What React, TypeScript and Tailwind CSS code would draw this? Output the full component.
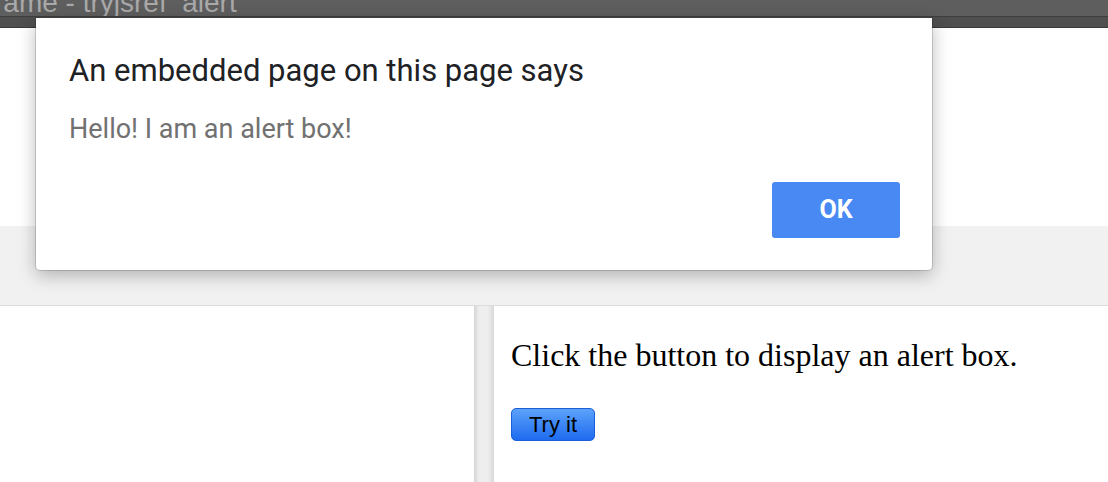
export default function App() {
  return (
    <div className="relative w-[1108px] h-[482px] overflow-hidden bg-white flex flex-col">
      {/* window title bar */}
      <div className="h-[16px] shrink-0 bg-[#5e5e5e] overflow-hidden flex items-end">
        <div className="-ml-[6px] mb-[2px] text-[#a9a9a9] text-[28px] leading-[22px] whitespace-nowrap" style={{ fontFamily: "'Liberation Sans', sans-serif" }}>
          rame - tryjsref_alert
        </div>
      </div>
      <div className="h-px shrink-0 bg-[#3e3e3e]" />
      <div className="h-[10px] shrink-0 bg-[#4f4f4f]" />
      <div className="h-px shrink-0 bg-[#3a3a3a]" />
      {/* page header area */}
      <div className="h-[198px] shrink-0 bg-white" />
      <div className="h-[80px] shrink-0 bg-[#f1f1f1] border-b border-[#dcdcdc]" />
      {/* content */}
      <div className="flex flex-1">
        <div className="w-[474px] bg-white" />
        <div className="w-[20px] bg-[linear-gradient(90deg,#d4d4d4_0px,#eeeeee_5px,#eeeeee_14px,#d8d8d8_20px)]" />
        <div className="flex-1 bg-white pl-[17px] pt-[31px] flex flex-col items-start">
          <p className="text-[32px] leading-[37px] text-black whitespace-nowrap" style={{ fontFamily: "'Liberation Serif', serif" }}>
            Click the button to display an alert box.
          </p>
          <button className="mt-[34px] w-[84px] h-[33px] rounded-[5px] border border-[#1a5fd8] bg-[linear-gradient(180deg,#5ca2fb,#1e6bef)] text-black text-[22px] leading-[31px] text-center" style={{ fontFamily: "'Liberation Sans', sans-serif" }}>
            Try it
          </button>
        </div>
      </div>
      {/* alert dialog */}
      <div className="absolute left-[36px] top-[18px] w-[896px] h-[252px] bg-white rounded-b-[4px] shadow-[0_5px_18px_rgba(0,0,0,0.28),0_0_0_1px_rgba(0,0,0,0.14)] flex flex-col pl-[33px] pr-[32px] pt-[35px] pb-[32px]" style={{ fontFamily: "Roboto, 'Noto Sans', sans-serif" }}>
        <div className="text-[31px] leading-[36px] text-[#202124] whitespace-nowrap">
          An embedded page on this page says
        </div>
        <div className="mt-[24px] text-[27px] leading-[32px] text-[#717171] whitespace-nowrap">
          Hello! I am an alert box!
        </div>
        <div className="mt-auto flex justify-end">
          <button className="w-[128px] h-[56px] rounded-[3px] bg-[#4889f3] text-white text-[25px] font-bold">
            OK
          </button>
        </div>
      </div>
    </div>
  );
}
